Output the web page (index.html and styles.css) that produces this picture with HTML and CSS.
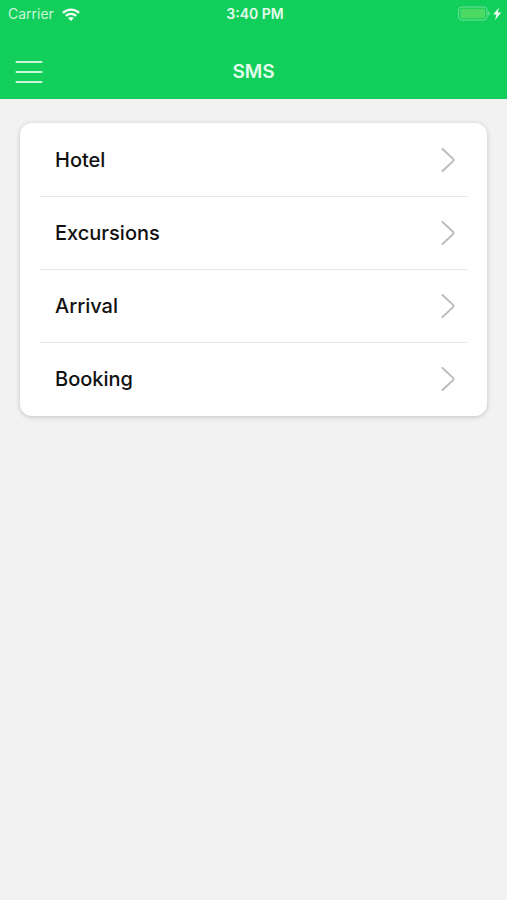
FILE: index.html
```html
<!DOCTYPE html>
<html lang="en">
<head>
<meta charset="utf-8">
<meta name="viewport" content="width=device-width, initial-scale=1">
<title>SMS</title>
<link rel="stylesheet" href="styles.css">
</head>
<body>
<header class="header">
  <div class="status">
    <div class="status-carrier">
      <span>Carrier</span>
      <svg class="wifi" viewBox="0 0 18 13" aria-hidden="true">
        <path class="wifi-arc" d="M.9 4.8C5.4 .5 12.6 .5 17.1 4.8M3.8 7.9C6.7 5.1 11.3 5.1 14.2 7.9"/>
        <path class="wifi-dot" d="M9 13 6 10C7.7 8.5 10.3 8.5 12 10Z"/>
      </svg>
    </div>
    <span class="status-time">3:40 PM</span>
    <div class="status-power">
      <svg class="battery" viewBox="0 0 44 16" aria-hidden="true">
        <rect class="battery-case" x=".6" y="1" width="28.4" height="13" rx="3"/>
        <rect class="battery-level" x="2.4" y="2.8" width="24.8" height="9.4" rx="1.4"/>
        <path class="battery-tip" d="M30.2 5.4C32.2 6 32.2 9 30.2 9.6Z"/>
        <path class="bolt" d="M41 1.4 35.2 8.6H38.4L37 14.2 43.2 6.6H39.8Z"/>
      </svg>
    </div>
  </div>
  <div class="navbar">
    <button class="menu" type="button" aria-label="Menu">
      <svg class="menu-icon" viewBox="0 0 28 24" aria-hidden="true">
        <path d="M1.5 2H26.5M1.5 12H26.5M1.5 22H26.5"/>
      </svg>
    </button>
    <h1 class="title">SMS</h1>
  </div>
</header>
<main class="content">
  <nav class="card" aria-label="SMS">
    <a class="row" href="#hotel"><span>Hotel</span><svg class="chevron" viewBox="0 0 14 24" aria-hidden="true"><path d="M1.5 1 11.8 10.6Q13.2 12 11.8 13.4L1.5 23"/></svg></a>
    <a class="row" href="#excursions"><span>Excursions</span><svg class="chevron" viewBox="0 0 14 24" aria-hidden="true"><path d="M1.5 1 11.8 10.6Q13.2 12 11.8 13.4L1.5 23"/></svg></a>
    <a class="row" href="#arrival"><span>Arrival</span><svg class="chevron" viewBox="0 0 14 24" aria-hidden="true"><path d="M1.5 1 11.8 10.6Q13.2 12 11.8 13.4L1.5 23"/></svg></a>
    <a class="row" href="#booking"><span>Booking</span><svg class="chevron" viewBox="0 0 14 24" aria-hidden="true"><path d="M1.5 1 11.8 10.6Q13.2 12 11.8 13.4L1.5 23"/></svg></a>
  </nav>
</main>
</body>
</html>
```
FILE: styles.css
```css
* {
  box-sizing: border-box;
}

body {
  margin: 0;
  min-height: 100vh;
  background: #f2f2f2;
  color: #111;
  font-family: Inter, "Liberation Sans", sans-serif;
}

.header {
  background: #12ce5b;
  color: #e4fbec;
}

.status {
  display: grid;
  grid-template-columns: 1fr auto 1fr;
  align-items: center;
  height: 28px;
  padding: 0 5px 0 8px;
  font-size: 14px;
  line-height: 20px;
}

.status-carrier {
  display: flex;
  align-items: center;
  gap: 8px;
  color: #c9f6d9;
}

.status-time {
  font-weight: 600;
}

.status-power {
  display: flex;
  justify-content: flex-end;
}

.wifi {
  width: 18px;
  height: 13px;
}

.wifi-arc {
  fill: none;
  stroke: #effdf4;
  stroke-width: 2.3;
}

.wifi-dot,
.bolt {
  fill: #effdf4;
}

.battery {
  width: 44px;
  height: 16px;
}

.battery-case {
  fill: none;
  stroke: #70e397;
}

.battery-level {
  fill: #4cd964;
}

.battery-tip {
  fill: #70e397;
}

.navbar {
  display: grid;
  grid-template-columns: 1fr auto 1fr;
  align-items: center;
  padding: 32px 15px 15px;
}

.menu {
  justify-self: start;
  display: flex;
  padding: 0;
  border: 0;
  background: none;
  cursor: pointer;
}

.menu-icon {
  width: 28px;
  height: 24px;
  fill: none;
  stroke: #c9f6d9;
  stroke-width: 2;
  stroke-linecap: round;
}

.title {
  margin: 0;
  font-size: 19px;
  font-weight: 600;
  line-height: 24px;
}

.content {
  padding: 24px 20px;
}

.card {
  padding: 0 20px 1px;
  border-radius: 12px;
  background: #fff;
  box-shadow: 0 1px 5px rgba(0, 0, 0, 0.2);
}

.row {
  display: flex;
  align-items: center;
  justify-content: space-between;
  height: 73px;
  padding: 0 12px 0 15px;
  color: inherit;
  font-size: 20px;
  font-weight: 500;
  text-decoration: none;
}

.row + .row {
  border-top: 1px solid #e8e8e8;
}

.chevron {
  width: 14px;
  height: 24px;
  fill: none;
  stroke: #bcbcbc;
  stroke-width: 2;
  stroke-linecap: round;
}
```
